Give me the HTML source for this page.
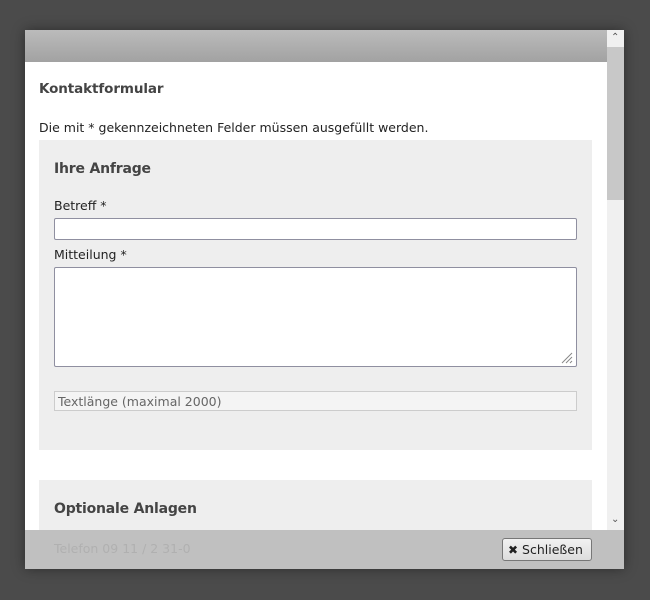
<!DOCTYPE html>
<html><head><style>
*{margin:0;padding:0;box-sizing:border-box}
body{width:650px;height:600px;background:#4b4b4b;position:relative;overflow:hidden;font-family:"DejaVu Sans","Liberation Sans",sans-serif;color:#222}
.dlg{position:absolute;left:25px;top:30px;width:599px;height:539px;background:#fff;overflow:hidden;box-shadow:0 0 12px rgba(0,0,0,.4)}
.hdr{position:absolute;left:0;top:0;width:582px;height:32px;background:linear-gradient(#bbb,#a2a2a2)}
.sb{position:absolute;left:582px;top:0;width:17px;height:500px;background:#f0f0f0}
.thumb{position:absolute;left:582px;top:17px;width:17px;height:153px;background:#c8c8c8}
.abs{position:absolute;white-space:nowrap}
.box{position:absolute;left:14px;width:553px;background:#eee}
.in{position:absolute;left:29px;width:523px;background:#fff;border:1px solid #8f8fa0;border-radius:2px}
.ftr{position:absolute;left:0;top:500px;width:599px;height:39px;background:rgba(190,190,190,.97)}
.btn{position:absolute;left:477px;top:8px;width:90px;height:23px;border:1px solid #777;border-radius:3px;background:linear-gradient(#f2f2f2,#ddd);font-size:12.5px;line-height:21px;padding-left:5px;color:#222}
h{font-weight:bold;color:#444;font-size:14px;letter-spacing:-0.2px}
</style></head><body>
<div class="dlg">
<div class="hdr"></div>
<div class="sb"></div><div class="thumb"></div>
<div class="abs" style="left:586px;top:2px;font-size:10px;color:#555">&#8963;</div>
<div class="abs" style="left:586px;top:484px;font-size:10px;color:#555">&#8964;</div>
<div class="abs" style="left:14px;top:51px;font-size:13.5px;font-weight:bold;color:#444;letter-spacing:-0.1px">Kontaktformular</div>
<div class="abs" style="left:14px;top:90px;font-size:12.5px">Die mit * gekennzeichneten Felder müssen ausgefüllt werden.</div>
<div class="box" style="top:110px;height:310px"></div>
<div class="abs" style="left:29px;top:128px"><h>Ihre Anfrage</h></div>
<div class="abs" style="left:29px;top:168px;font-size:12.5px">Betreff *</div>
<div class="in" style="top:188px;height:22px"></div>
<div class="abs" style="left:29px;top:217px;font-size:12.5px">Mitteilung *</div>
<div class="in" style="top:237px;height:100px"></div>
<svg class="abs" style="left:534px;top:320px" width="14" height="14"><path d="M13 3L3 13M13 7L7 13M13 11L11 13" stroke="#888" stroke-width="1"/></svg>
<div class="abs" style="left:29px;top:361px;width:523px;height:20px;background:#f4f4f4;border:1px solid #ccc;font-size:12.5px;color:#666;padding-left:3px;line-height:19px">Textlänge (maximal 2000)</div>
<div class="box" style="top:450px;height:100px"></div>
<div class="abs" style="left:29px;top:468px"><h>Optionale Anlagen</h></div>
<div class="ftr"><div class="abs" style="left:29px;top:11px;font-size:12.5px;color:#b0b0b0">Telefon 09 11 / 2 31-0</div>
<div class="btn"><b style="font-size:12px">&#10006;</b> Schließen</div></div>
</div>
</body></html>
